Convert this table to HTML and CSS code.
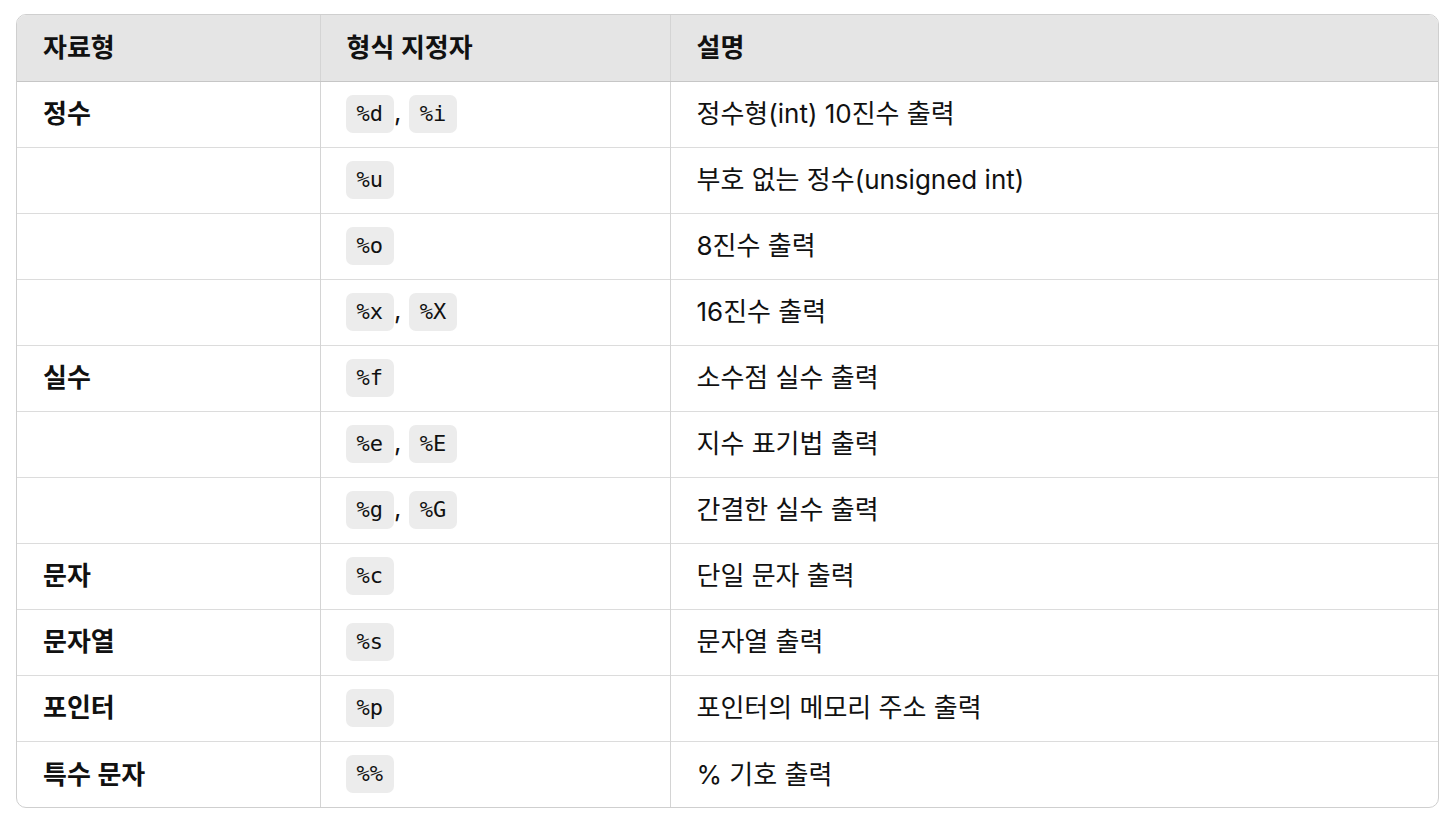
FILE: index.html
```html
<!DOCTYPE html>
<html lang="ko">
<head>
<meta charset="utf-8">
<link rel="stylesheet" href="styles.css">
</head>
<body>
<div class="wrap">
<table class="tbl">
<thead>
<tr><th class="c1">자료형</th><th class="c2">형식 지정자</th><th class="c3">설명</th></tr>
</thead>
<tbody>
<tr><td class="c1 strong">정수</td><td class="c2"><code>%d</code>, <code>%i</code></td><td class="c3">정수형(int) 10진수 출력</td></tr>
<tr><td class="c1"></td><td class="c2"><code>%u</code></td><td class="c3">부호 없는 정수(unsigned int)</td></tr>
<tr><td class="c1"></td><td class="c2"><code>%o</code></td><td class="c3">8진수 출력</td></tr>
<tr><td class="c1"></td><td class="c2"><code>%x</code>, <code>%X</code></td><td class="c3">16진수 출력</td></tr>
<tr><td class="c1 strong">실수</td><td class="c2"><code>%f</code></td><td class="c3">소수점 실수 출력</td></tr>
<tr><td class="c1"></td><td class="c2"><code>%e</code>, <code>%E</code></td><td class="c3">지수 표기법 출력</td></tr>
<tr><td class="c1"></td><td class="c2"><code>%g</code>, <code>%G</code></td><td class="c3">간결한 실수 출력</td></tr>
<tr><td class="c1 strong">문자</td><td class="c2"><code>%c</code></td><td class="c3">단일 문자 출력</td></tr>
<tr><td class="c1 strong">문자열</td><td class="c2"><code>%s</code></td><td class="c3">문자열 출력</td></tr>
<tr><td class="c1 strong">포인터</td><td class="c2"><code>%p</code></td><td class="c3">포인터의 메모리 주소 출력</td></tr>
<tr><td class="c1 strong">특수 문자</td><td class="c2"><code>%%</code></td><td class="c3">% 기호 출력</td></tr>
</tbody>
</table>
</div>
</body>
</html>
```
FILE: styles.css
```css
html, body {
  margin: 0;
  background: #ffffff;
}
body {
  padding: 14px 13px 0 16px;
  font-family: Inter, "Noto Sans CJK KR", sans-serif;
  color: #111111;
  font-size: 26px;
}
.wrap {
  border: 1px solid #cfcfcf;
  border-radius: 10px;
  overflow: hidden;
}
.tbl {
  width: 100%;
  border-collapse: collapse;
  table-layout: fixed;
}
th, td {
  box-sizing: border-box;
  text-align: left;
  padding: 0 0 0 26px;
  height: 66px;
  vertical-align: middle;
  line-height: 1.2;
}
.c1 { width: 303px; }
.c2 { width: 350px; }
th {
  background: #e5e5e5;
  font-weight: 600;
  border-bottom: 1px solid #c6c6c6;
}
td {
  border-top: 1px solid #dcdcdc;
  font-weight: 400;
}
tbody tr:first-child td { border-top: none; }
th + th, td + td {
  border-left: 1px solid #d4d4d4;
}
td.c2 { padding-left: 25px; }
.strong { font-weight: 600; }
code {
  display: inline-block;
  font-family: "DejaVu Sans Mono", monospace;
  font-size: 22px;
  line-height: 38px;
  height: 38px;
  padding: 0 11px;
  background: #ececec;
  border-radius: 7px;
  color: #111111;
  vertical-align: middle;
}
```
